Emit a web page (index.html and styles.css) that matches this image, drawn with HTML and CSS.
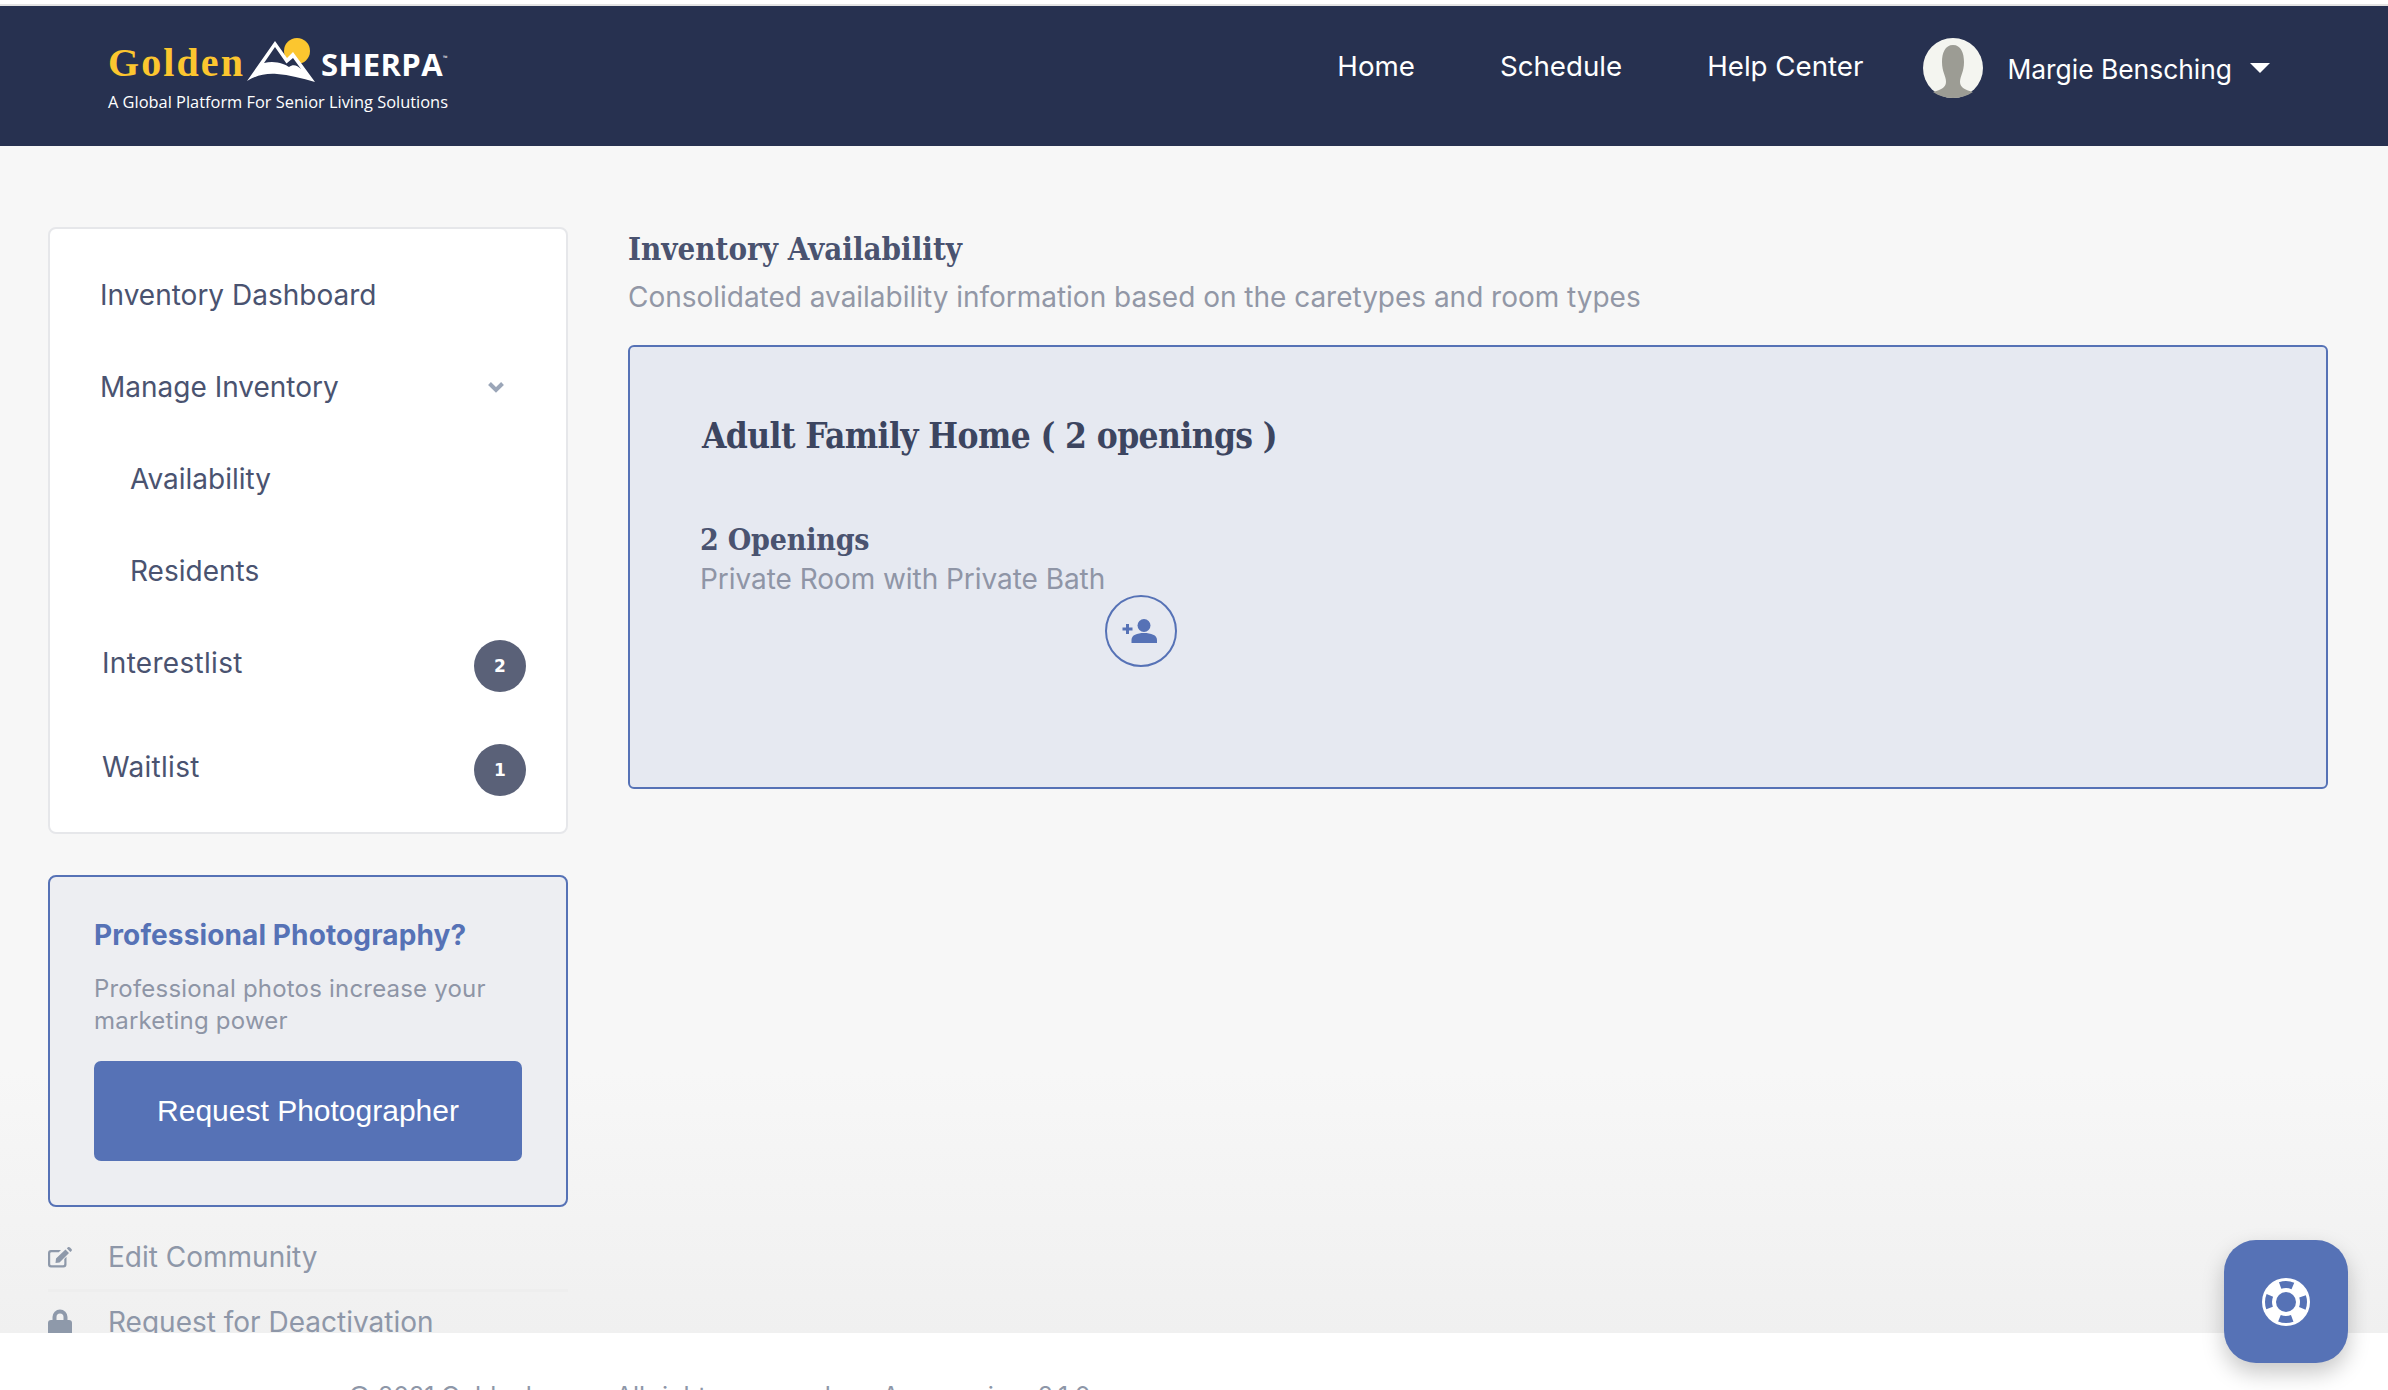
FILE: index.html
```html
<!DOCTYPE html>
<html lang="en">
<head>
    <meta charset="UTF-8">
    <meta name="viewport" content="width=device-width, initial-scale=1.0">
    <title>Golden Sherpa - Inventory Availability</title>
    <link rel="stylesheet" href="styles.css">
</head>
<body>
    <div class="app">
        <header class="topbar">
            <div class="logo">
                <div class="logo-main">
                    <span class="logo-golden">Golden</span>
                    <svg class="logo-mark" viewBox="0 0 70 46" aria-hidden="true">
                        <circle cx="50" cy="13" r="13" fill="#fcc62f"/>
                        <path d="M0 43 L28 3 L40 20 L46 14 L68 44 C55 40 42 37 30 36 C18 35 8 38 0 43 Z" fill="#fff"/>
                        <path d="M17 25 L28 9 L39.500 25.500 L46 20 L54 31 C50 27 46 26 42 29 C38 26 28 22 17 25 Z" fill="#273150"/>
                    </svg>
                    <span class="logo-sherpa">SHERPA<sup class="logo-tm">™</sup></span>
                </div>
                <div class="logo-tag">A Global Platform For Senior Living Solutions</div>
            </div>
            <nav class="topnav">
                <a class="topnav-link">Home</a>
                <a class="topnav-link">Schedule</a>
                <a class="topnav-link">Help Center</a>
            </nav>
            <div class="user">
                <svg class="avatar" viewBox="0 0 60 60" aria-hidden="true">
                    <circle cx="30" cy="30" r="30" fill="#f4f5f0"/>
                    <path d="M30 7 C38 7 41 15 41 24 C41 34 37 38 37 44 C37 50 43 52 50 54 C44 58 37 60 30 60 C23 60 16 58 10 54 C17 52 23 50 23 44 C23 38 19 34 19 24 C19 15 22 7 30 7 Z" fill="#9c9c94"/>
                </svg>
                <span class="user-name">Margie Bensching</span>
                <span class="user-caret"></span>
            </div>
        </header>

        <div class="content">
            <aside class="sidebar">
                <ul class="side-menu">
                    <li class="side-row">Inventory Dashboard</li>
                    <li class="side-row">
                        <span>Manage Inventory</span>
                        <svg class="side-chevron" viewBox="0 0 18 12" aria-hidden="true"><path d="M2.5 2.5 L9 9 L15.500 2.500" fill="none" stroke="#9ba6b8" stroke-width="4"/></svg>
                    </li>
                    <li class="side-row side-sub">Availability</li>
                    <li class="side-row side-sub">Residents</li>
                    <li class="side-row side-count side-first-count">
                        <span class="side-label">Interestlist</span>
                        <span class="badge">2</span>
                    </li>
                    <li class="side-row side-count">
                        <span class="side-label">Waitlist</span>
                        <span class="badge">1</span>
                    </li>
                </ul>

                <div class="promo">
                    <h3 class="promo-title">Professional Photography?</h3>
                    <p class="promo-text">Professional photos increase your marketing power</p>
                    <button class="promo-btn">Request Photographer</button>
                </div>

                <a class="side-link side-link-line">
                    <svg class="side-icon" viewBox="0 0 24 21" aria-hidden="true">
                        <path d="M3 3 H13 L10.800 5.200 H3.500 a1.300 1.300 0 0 0 -1.300 1.300 V17 a1.300 1.300 0 0 0 1.300 1.300 H15 a1.300 1.300 0 0 0 1.300 -1.300 V12 L18.500 9.800 V17.500 a3 3 0 0 1 -3 3 H3 a3 3 0 0 1 -3 -3 V6 a3 3 0 0 1 3 -3 Z" fill="#8e99aa"/>
                        <path d="M8 11.500 L17.500 2.500 L21 6 L11.500 15.500 L7.500 16 Z M18.800 1.300 L20 0.300 C20.800 -0.200 21.500 0 22 0.500 L23.500 2 C24 2.600 24 3.300 23.500 3.900 L22.300 5 Z" fill="#8e99aa"/>
                    </svg>
                    <span>Edit Community</span>
                </a>
                <a class="side-link">
                    <svg class="side-icon side-icon-lock" viewBox="0 0 24 27" aria-hidden="true">
                        <path d="M6.500 12 V8 a5.500 5.500 0 0 1 11 0 V12" fill="none" stroke="#8e99aa" stroke-width="4"/>
                        <rect x="0" y="11" width="24" height="16" rx="3" fill="#8e99aa"/>
                    </svg>
                    <span>Request for Deactivation</span>
                </a>
            </aside>

            <main class="main">
                <h1 class="page-title">Inventory Availability</h1>
                <p class="page-sub">Consolidated availability information based on the caretypes and room types</p>

                <section class="care-panel">
                    <h2 class="care-title">Adult Family Home ( 2 openings )</h2>
                    <div class="opening">
                        <h4 class="opening-count">2 Openings</h4>
                        <p class="opening-room">Private Room with Private Bath</p>
                        <button class="add-resident" aria-label="Add resident">
                            <svg viewBox="0 0 35 24" aria-hidden="true">
                                <circle cx="22" cy="6.500" r="6.500" fill="#5672b6"/>
                                <path d="M9.500 24 V21 C9.500 16 15 14 22 14 C29 14 35 16 35 21 V24 Z" fill="#5672b6"/>
                                <path d="M5.500 5 V15 M0.500 10 H10.500" stroke="#5672b6" stroke-width="3" fill="none"/>
                            </svg>
                        </button>
                    </div>
                </section>
            </main>
        </div>

        <footer class="footer">© 2021 Goldenleaves. All rights reserved.<span class="footer-version">App version: 2.1.0</span></footer>
    </div>

    <button class="help-btn" aria-label="Help">
        <svg viewBox="0 0 48 48" aria-hidden="true">
            <circle cx="24" cy="24" r="24" fill="#fff"/>
            <circle cx="24" cy="24" r="10" fill="#5672b6"/>
            <circle cx="24" cy="24" r="17.500" fill="none" stroke="#5672b6" stroke-width="7" stroke-dasharray="13 14.490" stroke-dashoffset="6.500"/>
        </svg>
    </button>
</body>
</html>
```

FILE: styles.css
```css
* {
    margin: 0;
    padding: 0;
    box-sizing: border-box;
}

html, body {
    height: 100%;
}

body {
    font-family: Inter, 'Noto Sans', sans-serif;
    color: #4a5370;
    background: white;
    overflow: hidden;
}

.app {
    height: 100vh;
    display: flex;
    flex-direction: column;
    overflow: hidden;
    padding-top: 4px;
}

/* top bar */
.topbar {
    flex: none;
    height: 142px;
    background: #273150;
    border-top: 2px solid #e3e3e3;
    display: flex;
    align-items: flex-start;
    padding: 32px 118px 0 108px;
    color: white;
}

.logo {
    width: 380px;
}

.logo-main {
    display: flex;
    align-items: flex-end;
    height: 44px;
}

.logo-golden {
    font-family: 'Liberation Serif', serif;
    font-weight: bold;
    font-size: 40px;
    line-height: 40px;
    letter-spacing: 2.1px;
    color: #fcc62f;
    margin-right: 2px;
    margin-bottom: -1px;
}

.logo-mark {
    width: 70px;
    height: 46px;
    flex: none;
    margin-bottom: -2px;
}

.logo-sherpa {
    font-family: 'Open Sans', sans-serif;
    font-weight: 700;
    font-size: 31px;
    line-height: 32px;
    letter-spacing: 0.4px;
    margin-left: 4px;
    margin-bottom: 2px;
    white-space: nowrap;
}

.logo-tm {
    font-size: 6px;
    font-weight: 400;
    line-height: 0;
    vertical-align: 16px;
}

.logo-tag {
    font-family: 'Open Sans', sans-serif;
    font-size: 16.400px;
    line-height: 20px;
    margin-top: 10px;
    white-space: nowrap;
}

.topnav {
    margin-left: auto;
    display: flex;
    gap: 85px;
    margin-top: 10px;
}

.topnav-link {
    font-size: 27.700px;
    line-height: 36px;
    white-space: nowrap;
}

.user {
    display: flex;
    align-items: center;
    margin-left: 60px;
}

.avatar {
    width: 60px;
    height: 60px;
    flex: none;
}

.user-name {
    font-size: 26.400px;
    line-height: 36px;
    margin-left: 24px;
    margin-top: 1px;
    white-space: nowrap;
}

.user-caret {
    width: 0;
    height: 0;
    margin-left: 18px;
    border-left: 10px solid transparent;
    border-right: 10px solid transparent;
    border-top: 10px solid white;
}

/* page body */
.content {
    flex: 1;
    min-height: 0;
    overflow: hidden;
    display: flex;
    gap: 60px;
    padding: 81px 60px 0 48px;
    background: linear-gradient(180deg, #f7f7f7 78%, #f0f0f0 100%);
}

.sidebar {
    flex: none;
    width: 520px;
}

.side-menu {
    list-style: none;
    height: 607px;
    background: white;
    border: 2px solid #e6e7ea;
    border-radius: 8px;
    padding: 20px 40px 0 50px;
}

.side-row {
    height: 92px;
    display: flex;
    align-items: center;
    justify-content: space-between;
    font-size: 28px;
    white-space: nowrap;
}

.side-sub {
    padding-left: 30px;
}

.side-count {
    height: 104px;
    padding-left: 2px;
}

.side-first-count {
    margin-top: -3px;
}

.side-label {
    margin-bottom: 6px;
    letter-spacing: 0.3px;
}

.side-chevron {
    width: 18px;
    height: 12px;
    margin-right: 21px;
}

.badge {
    width: 52px;
    height: 52px;
    border-radius: 50%;
    background: #5a6178;
    color: white;
    font-family: 'DejaVu Sans', sans-serif;
    font-size: 17px;
    font-weight: 700;
    display: flex;
    align-items: center;
    justify-content: center;
}

.promo {
    margin-top: 41px;
    height: 332px;
    background: #edeef2;
    border: 2px solid #5672b6;
    border-radius: 8px;
    padding: 40px 44px 0;
}

.promo-title {
    font-size: 28px;
    line-height: 36px;
    font-weight: 700;
    letter-spacing: 0.12px;
    color: #5672b6;
    white-space: nowrap;
}

.promo-text {
    margin-top: 20px;
    font-size: 24px;
    line-height: 32px;
    letter-spacing: 0.2px;
    color: #8e95a6;
}

.promo-btn {
    display: block;
    width: 428px;
    height: 100px;
    margin-top: 24px;
    background: #5672b6;
    color: white;
    border: none;
    border-radius: 7px;
    font-family: 'Liberation Sans', Arial, sans-serif;
    font-size: 30px;
}

.side-link {
    display: flex;
    align-items: center;
    height: 42px;
    font-size: 28px;
    color: #8e97a8;
    white-space: nowrap;
}

.side-link-line {
    height: 85px;
    padding-top: 18px;
    border-bottom: 3px solid #eeeeee;
}

.side-icon {
    width: 24px;
    height: 21px;
    flex: none;
    margin-right: 36px;
}

.side-icon-lock {
    height: 27px;
}

.side-link + .side-link {
    margin-top: 9px;
}

/* main column */
.main {
    flex: 1;
    min-width: 0;
}

.page-title {
    font-family: 'DejaVu Serif', serif;
    font-stretch: condensed;
    font-weight: 700;
    font-size: 31px;
    line-height: 44px;
    color: #4a5370;
}

.page-sub {
    margin-top: 4px;
    font-size: 28px;
    line-height: 44px;
    letter-spacing: -0.02px;
    color: #9297a6;
    white-space: nowrap;
}

.care-panel {
    margin-top: 26px;
    height: 444px;
    background: #e6e9f1;
    border: 2px solid #5672b6;
    border-radius: 6px;
    padding: 63px 70px 0;
}

.care-title {
    font-family: 'DejaVu Serif', serif;
    font-stretch: condensed;
    font-weight: 700;
    font-size: 35px;
    line-height: 52px;
    letter-spacing: -0.6px;
    color: #3c4560;
    margin-left: 2px;
}

.opening {
    display: grid;
    grid-template-columns: auto auto;
    justify-content: start;
    margin-top: 56px;
}

.opening-count {
    grid-column: 1;
    font-family: 'DejaVu Serif', serif;
    font-stretch: condensed;
    font-weight: 700;
    font-size: 30px;
    line-height: 43px;
    letter-spacing: -0.2px;
    color: #4a5370;
}

.opening-room {
    grid-column: 1;
    font-size: 28px;
    line-height: 36px;
    letter-spacing: -0.05px;
    color: #8f95a6;
    white-space: nowrap;
}

.add-resident {
    grid-column: 2;
    grid-row: 3;
    width: 72px;
    height: 72px;
    margin-top: -2px;
    border: 2px solid #5672b6;
    border-radius: 50%;
    background: transparent;
    display: flex;
    align-items: center;
    justify-content: center;
}

.add-resident svg {
    width: 35px;
    height: 24px;
    margin-right: 3px;
}

.footer {
    flex: none;
    height: 57px;
    overflow: hidden;
    background: white;
    padding: 47px 0 0 348px;
    font-size: 25px;
    line-height: 32px;
    color: #8e97a8;
    white-space: nowrap;
}

.footer-version {
    margin-left: 44px;
}

.help-btn {
    position: fixed;
    right: 40px;
    bottom: 27px;
    width: 124px;
    height: 123px;
    border: none;
    border-radius: 32px;
    background: #5672b6;
    box-shadow: 0 10px 22px rgba(0, 0, 0, 0.22);
    display: flex;
    align-items: center;
    justify-content: center;
}

.help-btn svg {
    width: 48px;
    height: 48px;
}
```
